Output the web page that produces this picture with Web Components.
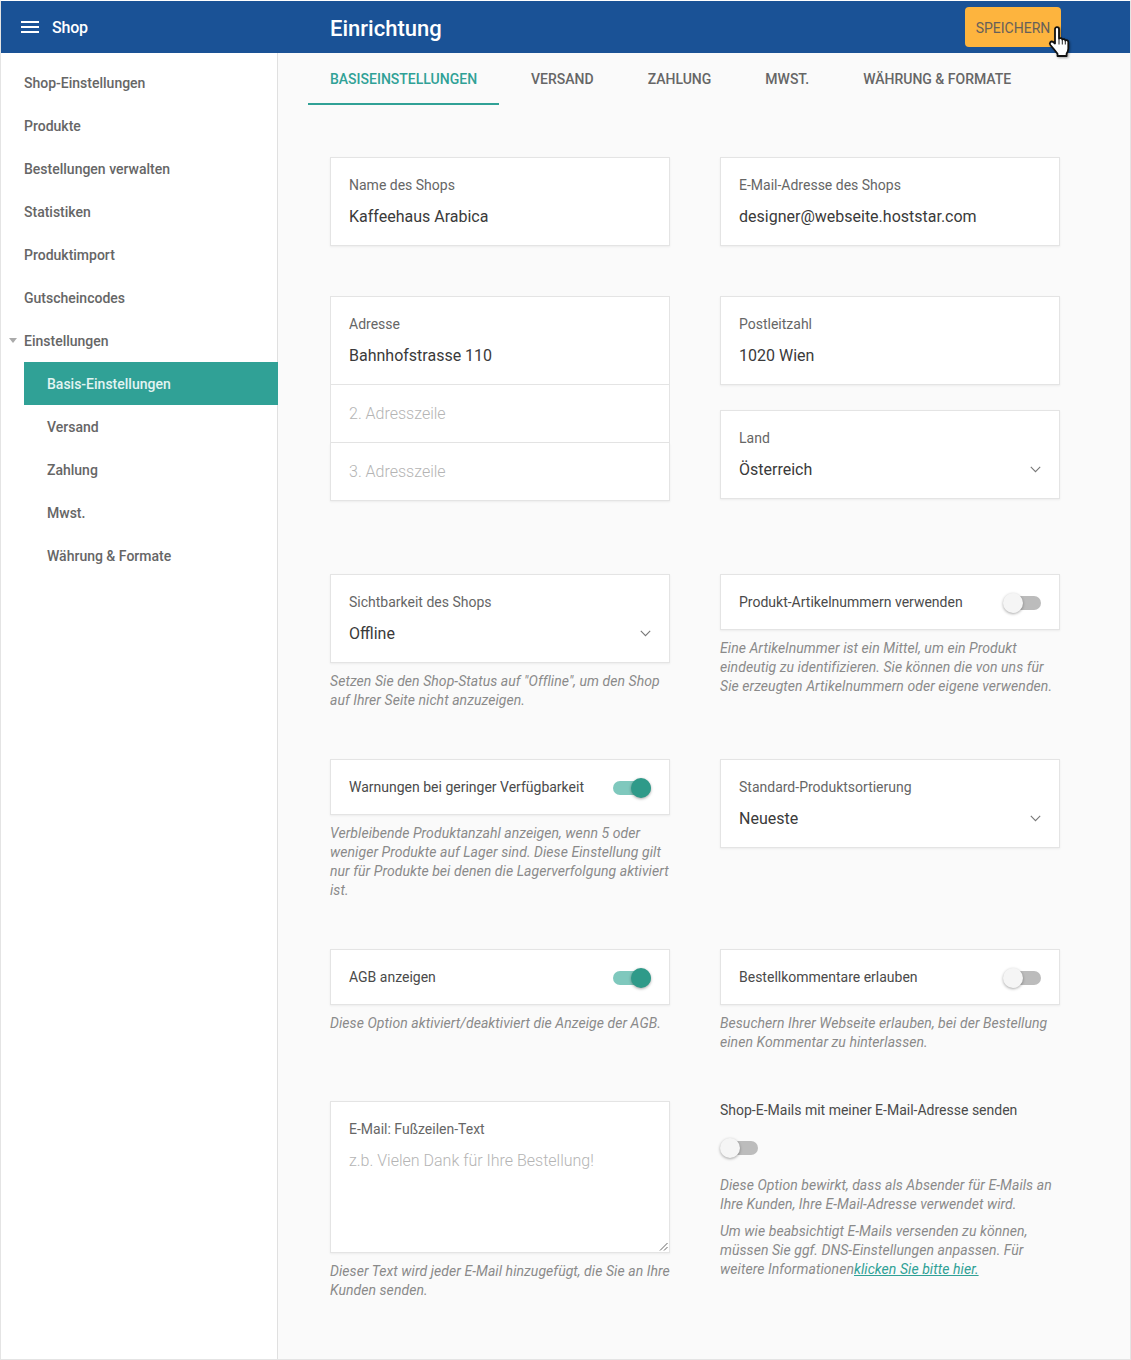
<!DOCTYPE html>
<html lang="de">
<head>
<meta charset="utf-8">
<title>Einrichtung</title>
<style>
    html, body { margin: 0; padding: 0; background: #fff; }
    body { font-family: Roboto, "Liberation Sans", sans-serif; }
</style>
</head>
<body>
<shop-app>
    <shop-header slot="header" title="Einrichtung" shop="Shop" action="SPEICHERN"></shop-header>
    <shop-sidebar slot="side">
        <side-item>Shop-Einstellungen</side-item>
        <side-item>Produkte</side-item>
        <side-item>Bestellungen verwalten</side-item>
        <side-item>Statistiken</side-item>
        <side-item>Produktimport</side-item>
        <side-item>Gutscheincodes</side-item>
        <side-item open>Einstellungen</side-item>
        <side-item sub active>Basis-Einstellungen</side-item>
        <side-item sub>Versand</side-item>
        <side-item sub>Zahlung</side-item>
        <side-item sub>Mwst.</side-item>
        <side-item sub>Währung &amp; Formate</side-item>
    </shop-sidebar>
    <tab-bar>
        <tab-item active>Basiseinstellungen</tab-item>
        <tab-item>Versand</tab-item>
        <tab-item>Zahlung</tab-item>
        <tab-item>Mwst.</tab-item>
        <tab-item>Währung &amp; Formate</tab-item>
    </tab-bar>
    <form-row style="margin-top:52px">
        <div>
            <field-card label="Name des Shops" value="Kaffeehaus Arabica"></field-card>
        </div>
        <div>
            <field-card label="E-Mail-Adresse des Shops" value="designer@webseite.hoststar.com"></field-card>
        </div>
    </form-row>
    <form-row style="margin-top:50px">
        <div>
            <field-card label="Adresse" value="Bahnhofstrasse 110" flat></field-card>
            <line-field>2. Adresszeile</line-field>
            <line-field last>3. Adresszeile</line-field>
        </div>
        <div>
            <field-card label="Postleitzahl" value="1020 Wien"></field-card>
            <field-card label="Land" value="Österreich" select style="margin-top:25px"></field-card>
        </div>
    </form-row>
    <form-row style="margin-top:73px">
        <div>
            <field-card label="Sichtbarkeit des Shops" value="Offline" select></field-card>
            <hint-text>Setzen Sie den Shop-Status auf "Offline", um den Shop auf Ihrer Seite nicht anzuzeigen.</hint-text>
        </div>
        <div>
            <switch-card label="Produkt-Artikelnummern verwenden"></switch-card>
            <hint-text>Eine Artikelnummer ist ein Mittel, um ein Produkt eindeutig zu identifizieren. Sie können die von uns für Sie erzeugten Artikelnummern oder eigene verwenden.</hint-text>
        </div>
    </form-row>
    <form-row style="margin-top:49px">
        <div>
            <switch-card label="Warnungen bei geringer Verfügbarkeit" on></switch-card>
            <hint-text>Verbleibende Produktanzahl anzeigen, wenn 5 oder weniger Produkte auf Lager sind. Diese Einstellung gilt nur für Produkte bei denen die Lagerverfolgung aktiviert ist.</hint-text>
        </div>
        <div>
            <field-card label="Standard-Produktsortierung" value="Neueste" select></field-card>
        </div>
    </form-row>
    <form-row style="margin-top:49px">
        <div>
            <switch-card label="AGB anzeigen" on></switch-card>
            <hint-text>Diese Option aktiviert/deaktiviert die Anzeige der AGB.</hint-text>
        </div>
        <div>
            <switch-card label="Bestellkommentare erlauben"></switch-card>
            <hint-text>Besuchern Ihrer Webseite erlauben, bei der Bestellung einen Kommentar zu hinterlassen.</hint-text>
        </div>
    </form-row>
    <form-row style="margin-top:49px">
        <div>
            <area-card label="E-Mail: Fußzeilen-Text" placeholder="z.b. Vielen Dank für Ihre Bestellung!"></area-card>
            <hint-text>Dieser Text wird jeder E-Mail hinzugefügt, die Sie an Ihre Kunden senden.</hint-text>
        </div>
        <div>
            <plain-switch label="Shop-E-Mails mit meiner E-Mail-Adresse senden"></plain-switch>
            <hint-text>Diese Option bewirkt, dass als Absender für E-Mails an Ihre Kunden, Ihre E-Mail-Adresse verwendet wird.</hint-text>
            <hint-text tight>Um wie beabsichtigt E-Mails versenden zu können, müssen Sie ggf. DNS-Einstellungen anpassen. Für weitere Informationen<a href="#">klicken Sie bitte hier.</a></hint-text>
        </div>
    </form-row>
</shop-app>

<script>
function define(name, css, html) {
    customElements.define(name, class extends HTMLElement {
        connectedCallback() {
            if (this.shadowRoot) return;
            this.attachShadow({ mode: 'open' });
            const attr = n => this.getAttribute(n) || '';
            const has = n => this.hasAttribute(n);
            this.shadowRoot.innerHTML = `<style>${css}</style>` + (typeof html === 'function' ? html(attr, has) : html);
        }
    });
}

const chevron = `<svg class="chev" width="11" height="7" viewBox="0 0 11 7"><path d="M.8.9l4.7 4.7L10.2.9" fill="none" stroke="#777" stroke-width="1.1"/></svg>`;

define('shop-app', `
    :host { display: block; box-sizing: border-box; width: 1131px; height: 1360px; border: 1px solid #e4e4e4; border-top-color: #fff; overflow: hidden; }
    .body { display: flex; height: 1306px; }
    aside { width: 276px; flex: none; background: #fff; border-right: 1px solid #e0e0e0; }
    main { flex: 1; background: #fafafa; padding: 0 30px; }
`, `
    <slot name="header"></slot>
    <div class="body">
        <aside><slot name="side"></slot></aside>
        <main><slot></slot></main>
    </div>
`);

define('shop-header', `
    :host { display: flex; align-items: center; height: 52px; background: #1a5296; color: #fff; position: relative; }
    .menu { display: flex; align-items: center; width: 329px; flex: none; font-size: 16px; font-weight: 500; letter-spacing: -.2px; padding-top: 1px; box-sizing: border-box; }
    .burger { width: 18px; height: 12px; margin: -1px 13px 0 20px; border-top: 2px solid #fff; border-bottom: 2px solid #fff; box-sizing: border-box; position: relative; }
    .burger::after { content: ''; position: absolute; left: 0; right: 0; top: 3px; height: 2px; background: #fff; }
    h1 { margin: 2px 0 0; font-size: 22px; font-weight: 500; flex: 1; }
    button { font: 400 14px Roboto, sans-serif; color: #66605a; background: #fdb43e; border: 0; border-radius: 4px; width: 96px; height: 40px; padding: 2px 0 0; margin-right: 69px; }
    .hand { position: absolute; left: 1047px; top: 24px; filter: drop-shadow(1px 1px 1px rgba(0,0,0,.35)); }
`, a => `
    <div class="menu"><span class="burger"></span>${a('shop')}</div>
    <h1>${a('title')}</h1>
    <button>${a('action')}</button>
    <svg class="hand" width="24" height="33" viewBox="0 0 24 33">
        <path d="M7 4c0-2.400 4-2.400 4 0v9.500c1.600-.8 3-.4 3.300 1 1.200-.8 2.700-.4 3 1 1.200-.7 3-.2 3 1.700v6.300c0 2.500-.8 3.700-1.700 5.200v2.300H9.500v-2.300C7.500 26 5 23 2.400 20 .8 18 3 15.400 5.200 17l1.800 1.500z" fill="#fff" stroke="#111" stroke-width="1.800" stroke-linejoin="round"/>
        <path d="M11 14v5.500M14.300 15v4.500M17.300 16v3.500" stroke="#222" stroke-width="1" fill="none"/>
    </svg>
`);

define('shop-sidebar', `
    :host { display: block; padding-top: 8px; }
`, `<slot></slot>`);

define('side-item', `
    :host { display: block; height: 43px; line-height: 45px; padding-left: 23px; font-size: 14px; font-weight: 500; color: #666; position: relative; white-space: nowrap; }
    :host([sub]) { margin-left: 23px; padding-left: 23px; }
    :host([active]) { background: #30a196; color: #e2f4f2; font-weight: 500; margin-right: -1px; }
    :host([open])::before { content: ''; position: absolute; left: 8px; top: 19px; border: 4.5px solid transparent; border-top: 5px solid #aaa; border-bottom: 0; }
`, `<slot></slot>`);

define('tab-bar', `
    :host { display: flex; height: 52px; }
`, `<slot></slot>`);

define('tab-item', `
    :host { display: block; padding: 0 22px; margin-right: 10px; line-height: 52px; height: 52px; box-sizing: border-box; font-size: 14px; font-weight: 500; color: #666; text-transform: uppercase; white-space: nowrap; }
    :host([active]) { color: #30a196; border-bottom: 2px solid #30a196; }
`, `<slot></slot>`);

define('form-row', `
    :host { display: grid; grid-template-columns: 340px 340px; column-gap: 50px; margin-left: 22px; }
`, `<slot></slot>`);

const cardBox = `display: block; box-sizing: border-box; background: #fff; border: 1px solid #e4e4e4; box-shadow: 0 1px 2px rgba(0,0,0,.06);`;

define('field-card', `
    :host { ${cardBox} height: 89px; padding: 18px 18px 0; position: relative; }
    :host([flat]) { box-shadow: none; }
    .l { font-size: 14px; line-height: 18px; color: #666; }
    .v { font-size: 16px; line-height: 20px; margin-top: 13px; color: #3a3a3a; }
    .chev { position: absolute; right: 18px; top: 55px; }
`, (a, has) => `
    <div class="l">${a('label')}</div>
    <div class="v">${a('value')}</div>
    ${has('select') ? chevron : ''}
`);

define('line-field', `
    :host { ${cardBox} height: 58px; border-top: 0; line-height: 57px; padding: 0 18px; font-size: 16px; font-weight: 300; color: #b4b4b4; box-shadow: none; }
    :host([last]) { box-shadow: 0 1px 2px rgba(0,0,0,.06); }
`, `<slot></slot>`);

define('toggle-switch', `
    :host { display: block; position: relative; width: 38px; height: 24px; flex: none; }
    :host([on]) { width: 39px; }
    .track { position: absolute; left: 1px; right: 0; top: 5px; height: 14px; border-radius: 7px; background: #bcbcbc; }
    .knob { position: absolute; left: 0; top: 2px; width: 20px; height: 20px; border-radius: 50%; background: #f5f5f5; box-shadow: 0 1px 3px rgba(0,0,0,.35); }
    :host([on]) .track { background: #7fc8bd; }
    :host([on]) .knob { left: 19px; background: #2f9a89; }
`, `<div class="track"></div><div class="knob"></div>`);

define('switch-card', `
    :host { ${cardBox} height: 56px; padding: 1px 18px 0; }
    .row { display: flex; align-items: center; justify-content: space-between; height: 54px; font-size: 14px; color: #4a4a4a; }
    span { margin-top: -2px; }
`, (a, has) => `<div class="row"><span>${a('label')}</span><toggle-switch ${has('on') ? 'on' : ''}></toggle-switch></div>`);

define('plain-switch', `
    :host { display: block; font-size: 14px; color: #4a4a4a; }
    .l { line-height: 18px; }
    toggle-switch { margin-top: 17px; margin-bottom: 16px; }
`, a => `<div class="l">${a('label')}</div><toggle-switch></toggle-switch>`);

define('area-card', `
    :host { ${cardBox} height: 152px; padding: 18px 18px 0; position: relative; }
    .l { font-size: 14px; line-height: 18px; color: #666; }
    .p { font-size: 16px; font-weight: 300; line-height: 20px; margin-top: 13px; color: #b4b4b4; }
    svg { position: absolute; right: 1px; bottom: 1px; }
`, a => `
    <div class="l">${a('label')}</div>
    <div class="p">${a('placeholder')}</div>
    <svg width="9" height="9" viewBox="0 0 9 9"><path d="M8.500 1L1 8.500M8.500 5L5 8.500" stroke="#666" fill="none"/></svg>
`);

define('hint-text', `
    :host { display: block; margin-top: 9px; font-size: 14px; line-height: 19px; font-style: italic; color: #8a8a8a; letter-spacing: .06px; }
    :host([tight]) { margin-top: 8px; }
    ::slotted(a) { color: #30a196; text-decoration: underline; }
`, `<slot></slot>`);
</script>
</body>
</html>
